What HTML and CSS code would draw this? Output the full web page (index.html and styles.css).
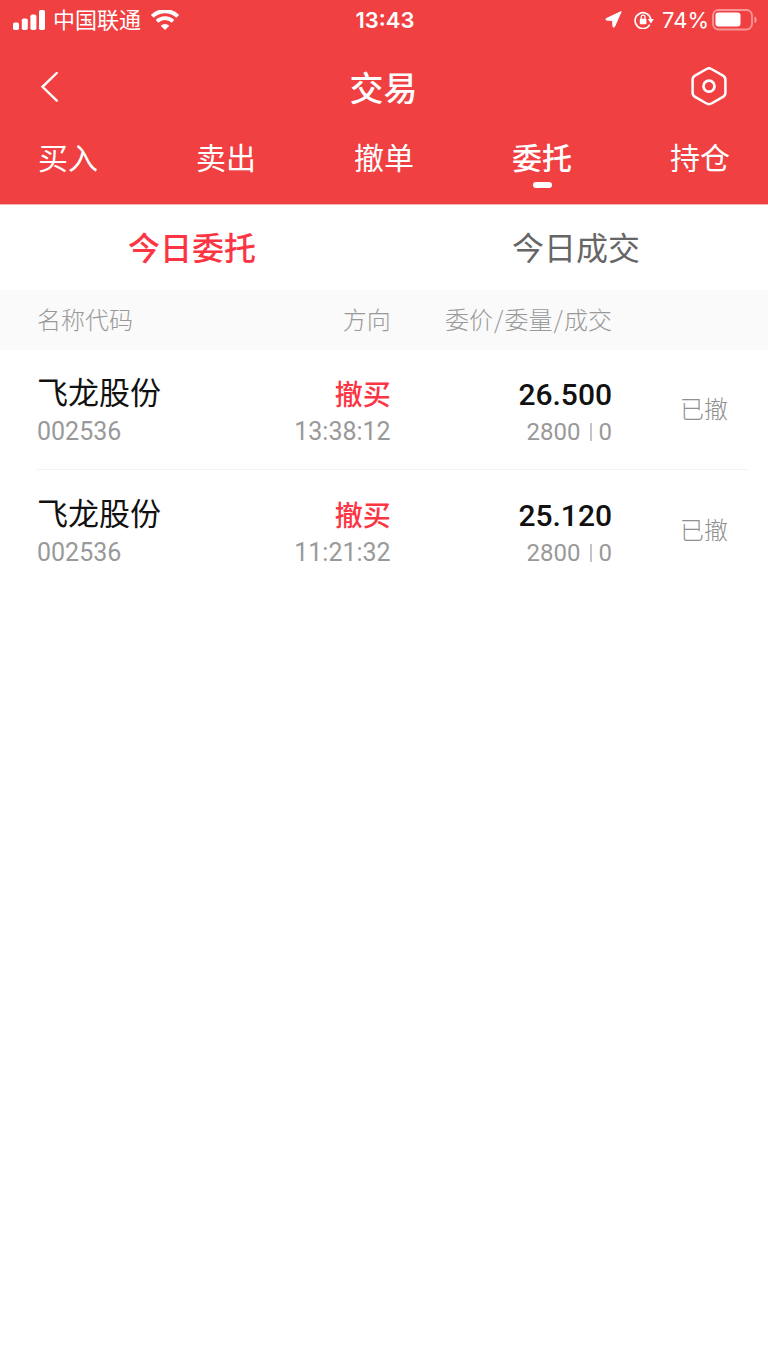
FILE: index.html
```html
<!DOCTYPE html>
<html lang="zh-CN">
<head>
<meta charset="utf-8">
<meta name="viewport" content="width=device-width, initial-scale=1">
<title>交易</title>
<link rel="stylesheet" href="styles.css">
</head>
<body>
<header class="header">
  <div class="status">
    <div class="status-left">
      <svg width="32" height="20" viewBox="0 0 32 20" fill="#fff" aria-hidden="true">
        <rect x="0" y="12.500" width="6" height="7.500" rx="1.800"/>
        <rect x="8.800" y="8.500" width="6" height="11.500" rx="1.800"/>
        <rect x="17.400" y="4.500" width="6" height="15.500" rx="1.800"/>
        <rect x="26" y="0" width="6" height="20" rx="1.800"/>
      </svg>
      <span class="carrier">中国联通</span>
      <svg width="28" height="20" viewBox="0 0 28 20" fill="none" aria-hidden="true">
        <path d="M1.300 6.300a18.200 18.200 0 0 1 25.400 0" stroke="#fff" stroke-width="4"/>
        <path d="M6 11.400a11.500 11.500 0 0 1 16 0" stroke="#fff" stroke-width="3.700"/>
        <path d="M14 20l-4.300-4.300a6.200 6.200 0 0 1 8.600 0z" fill="#fff"/>
      </svg>
    </div>
    <time class="clock">13:43</time>
    <div class="status-right">
      <svg width="17" height="17" viewBox="0 0 17 17" aria-hidden="true"><path d="M16.200.6 9.600 15.600Q8.500 17 8 15.400L7.600 9.500 1.400 9Q.200 8.500 1.300 7.600Z" fill="#fff" stroke="#fff" stroke-linejoin="round"/></svg>
      <svg class="lock" width="20" height="18" viewBox="0 0 20 18" fill="none" aria-hidden="true">
        <path d="M15.800 13.600A7.900 7.900 0 1 1 16.700 8" stroke="#fff" stroke-width="1.700"/>
        <path d="M13.800 8h6l-2.900 4.400z" fill="#fff"/>
        <rect x="5.800" y="7.800" width="6.600" height="5.500" rx=".7" fill="#fff"/>
        <path d="M7.200 8V6a1.900 1.900 0 0 1 3.800 0v2" stroke="#fff" stroke-width="1.200"/>
      </svg>
      <span class="percent">74%</span>
      <svg width="45" height="22" viewBox="0 0 45 22" fill="none" aria-hidden="true">
        <rect x="1" y="1" width="39" height="19.500" rx="5.500" stroke="#fff" stroke-opacity=".45" stroke-width="1.800"/>
        <rect x="3.500" y="3.500" width="25" height="14" rx="3" fill="#fff"/>
        <path d="M42.500 7.300q2.200 1 2.200 3.500t-2.200 3.500z" fill="#fff" fill-opacity=".5"/>
      </svg>
    </div>
  </div>
  <div class="titlebar">
    <button class="icon-button" type="button" aria-label="返回">
      <svg width="20" height="32" viewBox="0 0 20 32" fill="none"><path d="M16.800 2 2.500 15.800 16.800 29.600" stroke="#fff" stroke-width="2.400" stroke-linecap="round"/></svg>
    </button>
    <h1 class="title">交易</h1>
    <button class="icon-button" type="button" aria-label="设置">
      <svg width="36" height="40" viewBox="0 0 36 40" fill="none" stroke="#fff">
        <path d="M15.600 2Q18 .7 20.400 2L32 8.600Q34.400 10 34.400 12.700V25.800Q34.400 28.500 32 29.900L20.400 36.500Q18 37.800 15.600 36.500L4 29.900Q1.600 28.500 1.600 25.800V12.700Q1.600 10 4 8.600Z" stroke-width="2.500"/>
        <circle cx="18" cy="19.200" r="5.500" stroke-width="2.700"/>
      </svg>
    </button>
  </div>
  <nav class="tabs">
    <a class="tab" href="#buy">买入</a>
    <a class="tab" href="#sell">卖出</a>
    <a class="tab" href="#cancel">撤单</a>
    <a class="tab tab-active" href="#orders" aria-current="page">委托</a>
    <a class="tab" href="#holdings">持仓</a>
  </nav>
</header>
<main>
  <div class="switch">
    <button class="switch-item switch-active" type="button">今日委托</button>
    <button class="switch-item" type="button">今日成交</button>
  </div>
  <table class="orders">
    <thead>
      <tr>
        <th class="col-name">名称代码</th>
        <th class="col-side">方向</th>
        <th class="col-price">委价<span class="slash">/</span>委量<span class="slash">/</span>成交</th>
        <th class="col-state" aria-label="状态"></th>
      </tr>
    </thead>
    <tbody>
      <tr>
        <td class="col-name"><div class="name">飞龙股份</div><div class="sub">002536</div></td>
        <td class="col-side"><div class="side">撤买</div><div class="sub">13:38:12</div></td>
        <td class="col-price"><div class="price">26.500</div><div class="sub volume"><span>2800</span><span class="filled">0</span></div></td>
        <td class="col-state">已撤</td>
      </tr>
      <tr>
        <td class="col-name"><div class="name">飞龙股份</div><div class="sub">002536</div></td>
        <td class="col-side"><div class="side">撤买</div><div class="sub">11:21:32</div></td>
        <td class="col-price"><div class="price">25.120</div><div class="sub volume"><span>2800</span><span class="filled">0</span></div></td>
        <td class="col-state">已撤</td>
      </tr>
    </tbody>
  </table>
</main>
</body>
</html>
```
FILE: styles.css
```css
* { box-sizing: border-box; }
body {
  margin: 0;
  background: #fff;
  color: #111;
  font-family: "Noto Sans CJK SC", sans-serif;
}
button {
  padding: 0;
  border: 0;
  background: none;
  font-family: inherit;
}
svg { display: block; }

.header {
  background: #f04042;
  color: #fff;
  border-bottom: 1px solid #f5b5b6;
}
.status {
  display: grid;
  grid-template-columns: 1fr auto 1fr;
  align-items: center;
  height: 39px;
  padding: 0 11px 0 13px;
}
.status-left, .status-right { display: flex; align-items: center; }
.status-left { gap: 8px; }
.status-right { justify-content: flex-end; gap: 3px; }
.carrier {
  padding: 0 2px 3px 0;
  font-size: 22px;
  line-height: 34px;
  font-weight: 400;
}
.clock { font: 600 22px/38px Inter, sans-serif; }
.percent { font: 400 22px/38px Inter, sans-serif; }
.lock { margin: 0 5px 0 9px; }

.titlebar {
  display: flex;
  align-items: center;
  justify-content: space-between;
  height: 95px;
  padding: 0 41px 0 40px;
}
.icon-button {
  display: flex;
  width: 36px;
}
.title {
  margin: 0;
  font-size: 34px;
  line-height: 48px;
  font-weight: 500;
}
.tabs {
  display: flex;
  justify-content: space-between;
  height: 70px;
  padding: 0 38px;
}
.tab {
  display: flex;
  flex-direction: column;
  align-items: center;
  color: #fff;
  font-size: 30px;
  line-height: 44px;
  font-weight: 400;
  text-decoration: none;
}
.tab-active { font-weight: 500; }
.tab-active::after {
  content: "";
  width: 19px;
  height: 6px;
  margin-top: 4px;
  border-radius: 3px;
  background: #fff;
}

.switch {
  display: grid;
  grid-template-columns: 1fr 1fr;
  height: 85px;
}
.switch-item {
  padding-bottom: 4px;
  color: #666;
  font-size: 32px;
  font-weight: 400;
}
.switch-active { color: #fb3544; font-weight: 500; }

.orders {
  width: 100%;
  table-layout: fixed;
  border-collapse: collapse;
}
.orders thead { background: #fafafa; }
.orders th {
  height: 60px;
  padding: 0 0 2px;
  color: #999;
  font-size: 24px;
  line-height: 36px;
  font-weight: 300;
}
.slash { margin: 0 1px; }
.orders td { height: 121px; padding: 0; }
.orders tbody tr:not(:last-child) {
  background: linear-gradient(#f2f2f2, #f2f2f2) 37px 119px / calc(100% - 57px) 1px no-repeat;
}
.orders .col-name { width: 30%; padding-left: 37px; text-align: left; }
.orders .col-side { width: 21%; padding-right: 1px; text-align: right; }
.orders .col-price { text-align: right; }
.orders .col-state {
  width: 156px;
  padding: 0 40px 6px 0;
  color: #909090;
  font-size: 24px;
  font-weight: 300;
  text-align: right;
}
.name {
  padding-bottom: 8px;
  font-size: 31px;
  line-height: 34px;
}
.side {
  padding-bottom: 4px;
  color: #fb3544;
  font-size: 28px;
  line-height: 38px;
  font-weight: 500;
}
.price {
  font-family: Roboto, sans-serif;
  font-size: 30px;
  line-height: 42px;
  font-weight: 500;
}
.sub {
  color: #999;
  font-family: Roboto, sans-serif;
  font-size: 25px;
  line-height: 32px;
}
.volume {
  display: flex;
  align-items: center;
  justify-content: flex-end;
  gap: 9px;
  font-size: 24px;
}
.filled {
  display: flex;
  align-items: center;
  gap: 7px;
}
.filled::before {
  content: "";
  width: 2px;
  height: 18px;
  background: #c4c4ca;
}
```
